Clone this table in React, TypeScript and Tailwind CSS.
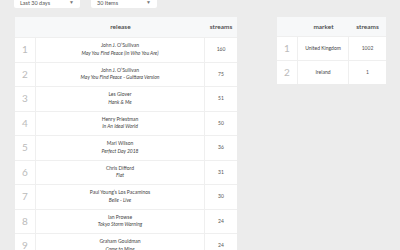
import React from 'react';

interface Release {
    rank: number;
    artist: string;
    title: string;
    streams: number;
}

const releases: Release[] = [
    { rank: 1, artist: 'John J. O\u2019Sullivan', title: 'May You Find Peace (In Who You Are)', streams: 160 },
    { rank: 2, artist: 'John J. O\u2019Sullivan', title: 'May You Find Peace - Guittara Version', streams: 75 },
    { rank: 3, artist: 'Les Glover', title: 'Hank & Me', streams: 51 },
    { rank: 4, artist: 'Henry Priestman', title: 'In An Ideal World', streams: 50 },
    { rank: 5, artist: 'Mari Wilson', title: 'Perfect Day 2018', streams: 36 },
    { rank: 6, artist: 'Chris Difford', title: 'Flat', streams: 31 },
    { rank: 7, artist: 'Paul Young\u2019s Los Pacaminos', title: 'Belle - Live', streams: 30 },
    { rank: 8, artist: 'Ian Prowse', title: 'Tokyo Storm Warning', streams: 24 },
    { rank: 9, artist: 'Graham Gouldman', title: 'Come to Mine', streams: 24 },
];

const markets = [
    { rank: 1, name: 'United Kingdom', streams: 1002 },
    { rank: 2, name: 'Ireland', streams: 1 },
];

const Select: React.FC<{ label: string }> = ({ label }) => (
    <div className="w-[66px] h-[14px] mt-[-6px] pt-[4px] bg-white flex items-center justify-between px-[6px] text-[5.5px] text-[#555] rounded-[2px]">
        <span>{label}</span>
        <span className="text-[5px] text-[#777]">▼</span>
    </div>
);

const App: React.FC = () => {
    return (
        <div className="w-[400px] h-[250px] overflow-hidden bg-[#ececec] px-[14px] font-['Lato','Open_Sans',sans-serif]">
            {/* Filtros */}
            <div className="flex gap-[11px]">
                <Select label="Last 30 days" />
                <Select label="30 Items" />
            </div>

            <div className="flex items-start gap-[40px] mt-[9px] pl-[1px]">
                {/* Releases */}
                <div className="w-[222px] bg-white">
                    <div className="flex h-[20px] bg-[#f7f8f9] text-[6.5px] font-semibold text-[#444]">
                        <div className="w-[21px]" />
                        <div className="flex-1 flex items-center justify-center">release</div>
                        <div className="w-[32px] flex items-center justify-center">streams</div>
                    </div>
                    {releases.map(r => (
                        <div key={r.rank} className="flex h-[24.5px] border-t border-[#efefef]">
                            <div className="w-[21px] flex items-center justify-center text-[10px] text-[#bbb] border-r border-[#efefef]">
                                {r.rank}
                            </div>
                            <div className="flex-1 flex flex-col items-center justify-center text-[5px] leading-[7.5px] text-[#444] border-r border-[#efefef]">
                                <span>{r.artist}</span>
                                <span className="italic">{r.title}</span>
                            </div>
                            <div className="w-[32px] flex items-center justify-center text-[5px] text-[#555]">
                                {r.streams}
                            </div>
                        </div>
                    ))}
                </div>

                {/* Markets */}
                <div className="w-[109px] bg-white">
                    <div className="flex h-[19px] bg-[#f7f8f9] text-[6.5px] font-semibold text-[#444]">
                        <div className="w-[21px]" />
                        <div className="w-[51px] flex items-center justify-center">market</div>
                        <div className="flex-1 flex items-center justify-center">streams</div>
                    </div>
                    {markets.map(m => (
                        <div key={m.rank} className="flex h-[24px] border-t border-[#efefef]">
                            <div className="w-[21px] flex items-center justify-center text-[10px] text-[#bbb] border-r border-[#efefef]">
                                {m.rank}
                            </div>
                            <div className="w-[51px] flex items-center justify-center text-[5px] text-[#444] border-r border-[#efefef]">
                                {m.name}
                            </div>
                            <div className="flex-1 flex items-center justify-center text-[5px] text-[#555]">
                                {m.streams}
                            </div>
                        </div>
                    ))}
                </div>
            </div>
        </div>
    );
};

export default App;
